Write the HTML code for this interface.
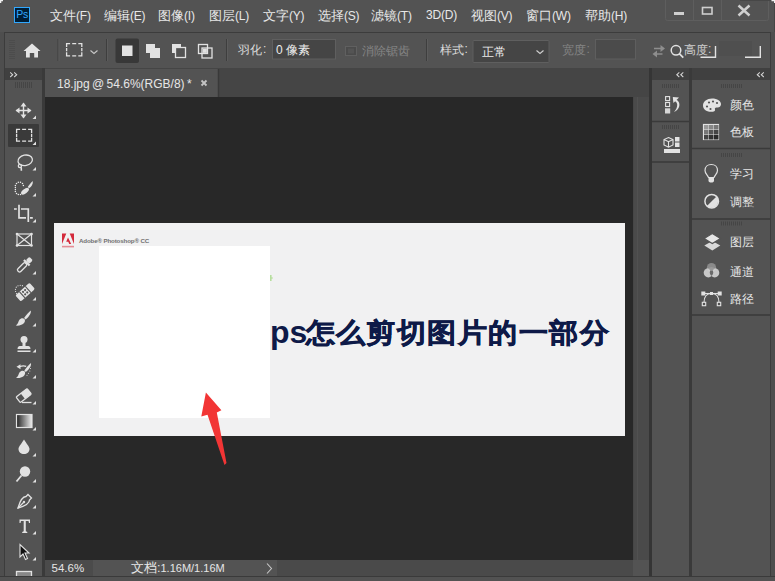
<!DOCTYPE html>
<html><head><meta charset="utf-8">
<style>
*{margin:0;padding:0;box-sizing:border-box}
html,body{width:775px;height:581px;overflow:hidden;background:#535353;font-family:"Liberation Sans",sans-serif;color:#e6e6e6}
.a{position:absolute}
.menu span{position:absolute;top:6.7px;font-size:13px;color:#e8e8e8;white-space:nowrap}
.menu i{font-style:normal;font-size:12px;letter-spacing:-0.2px}
</style></head><body>
<!-- frame -->
<div class="a" style="left:0;top:0;width:775px;height:581px;background:#535353"></div>
<!-- menu bar -->
<div class="a" style="left:14px;top:7px;width:16px;height:16px;background:#001e36;border:1.2px solid #31a8ff;color:#31a8ff;font-size:10.5px;line-height:13.5px;text-align:center;letter-spacing:-0.3px">Ps</div>
<div class="menu">
<span style="left:50px">文件<i>(F)</i></span>
<span style="left:104px">编辑<i>(E)</i></span>
<span style="left:158px">图像<i>(I)</i></span>
<span style="left:209px">图层<i>(L)</i></span>
<span style="left:263px">文字<i>(Y)</i></span>
<span style="left:318px">选择<i>(S)</i></span>
<span style="left:371px">滤镜<i>(T)</i></span>
<span style="left:426px"><i>3D(D)</i></span>
<span style="left:471px">视图<i>(V)</i></span>
<span style="left:526px">窗口<i>(W)</i></span>
<span style="left:585px">帮助<i>(H)</i></span>
</div>
<!-- options bar -->
<div class="a" style="left:0;top:32px;width:775px;height:549px;background:#4e4e4e"></div>
<div class="a" style="left:4px;top:32px;width:767px;height:37px;background:#535353;border:1px solid #3c3c3c"></div>
<!-- toolbar column -->
<div class="a" style="left:4px;top:68px;width:1px;height:513px;background:#3c3c3c"></div>
<div class="a" style="left:5px;top:69px;width:37px;height:507px;background:#535353"></div>
<div class="a" style="left:5px;top:68px;width:37px;height:12px;background:#404040"></div>
<div class="a" style="left:42px;top:68px;width:3px;height:513px;background:#3a3a3a"></div>
<!-- doc area -->
<div class="a" style="left:45px;top:68px;width:605px;height:29px;background:#454545"></div>
<div class="a" style="left:45px;top:69px;width:173px;height:28px;background:#535353"></div>
<div class="a" style="left:57px;top:77px;font-size:12px;word-spacing:-1px;color:#e6e6e6;white-space:nowrap">18.jpg @ 54.6%(RGB/8) *</div>
<svg class="a" style="left:0;top:60px" width="240" height="40" viewBox="0 60 240 40"><path d="M201.5 80.5 L206.5 85.5 M206.5 80.5 L201.5 85.5" stroke="#c4c4c4" stroke-width="1.8"/><path d="M218.5 69V97" stroke="#393939" stroke-width="1.5"/></svg>
<div class="a" style="left:45px;top:97px;width:588px;height:463px;background:#282828"></div>
<div class="a" style="left:633px;top:97px;width:16px;height:463px;background:#4a4a4a;border-left:1px solid #464646"></div>
<div class="a" style="left:637px;top:97px;width:1px;height:479px;background:#515151"></div>
<div class="a" style="left:45px;top:560px;width:604px;height:16px;background:#535353"></div>
<div class="a" style="left:45px;top:560px;width:48px;height:16px;background:#4b4b4b"></div>
<div class="a" style="left:277px;top:560px;width:356px;height:16px;background:#4a4a4a"></div>
<div class="a" style="left:51.5px;top:561.5px;font-size:11.5px;color:#e6e6e6">54.6%</div>
<div class="a" style="left:131px;top:560px;font-size:12.5px;color:#e6e6e6;white-space:nowrap">文档:<span style="font-size:11px;letter-spacing:0px">1.16M/1.16M</span></div>
<svg class="a" style="left:260px;top:560px" width="20" height="16" viewBox="260 560 20 16"><path d="M267 563.5 L271.5 568.5 L267 573.5" fill="none" stroke="#c8c8c8" stroke-width="1.1"/></svg>
<!-- image -->
<div class="a" style="left:54px;top:223px;width:571px;height:213px;background:#f1f1f2"></div>
<div class="a" style="left:99px;top:246px;width:171px;height:172px;background:#ffffff"></div>
<div class="a" style="left:270px;top:314px;font-size:32px;font-weight:bold;color:#0e1a48;white-space:nowrap">ps</div>
<div class="a" style="left:305.5px;top:314.5px;font-size:28.5px;letter-spacing:1.45px;font-weight:900;color:#0e1a48;-webkit-text-stroke:0.7px #0e1a48;white-space:nowrap;transform:scaleY(0.93);transform-origin:0 18px">怎么剪切图片的一部分</div>
<!-- dock -->
<div class="a" style="left:652px;top:69px;width:37px;height:507px;background:#535353"></div>
<div class="a" style="left:692px;top:69px;width:78px;height:507px;background:#535353"></div>
<div class="a" style="left:649px;top:68px;width:3px;height:513px;background:#353535"></div>
<div class="a" style="left:652px;top:68px;width:37px;height:12px;background:#404040"></div>
<div class="a" style="left:689px;top:68px;width:3px;height:513px;background:#3a3a3a"></div>
<div class="a" style="left:692px;top:68px;width:78px;height:12px;background:#404040"></div>
<div class="a" style="left:770px;top:32px;width:1px;height:549px;background:#3c3c3c"></div>
<svg class="a" style="left:0;top:0" width="775" height="581" viewBox="0 0 775 581">
<defs>
<linearGradient id="gr" x1="0" y1="0" x2="1" y2="0"><stop offset="0" stop-color="#222"/><stop offset="1" stop-color="#eee"/></linearGradient>
</defs>
<!-- selected marquee bg -->
<rect x="8" y="124" width="31" height="23" fill="#3a3a3a" rx="1"/>
<g fill="#e2e2e2" stroke="none">
<!-- tiny triangles -->
<path d="M36 115.5 L36 119 L32.5 119Z"/>
<path d="M36 141.5 L36 145 L32.5 145Z"/>
<path d="M36 167 L36 170.5 L32.5 170.5Z" />
<path d="M36 193 L36 196.5 L32.5 196.5Z"/>
<path d="M36 219 L36 222.5 L32.5 222.5Z"/>
<path d="M36 271 L36 274.5 L32.5 274.5Z"/>
<path d="M36 297 L36 300.5 L32.5 300.5Z"/>
<path d="M36 323 L36 326.5 L32.5 326.5Z"/>
<path d="M36 349 L36 352.5 L32.5 352.5Z"/>
<path d="M36 375 L36 378.5 L32.5 378.5Z"/>
<path d="M36 401 L36 404.5 L32.5 404.5Z"/>
<path d="M36 427 L36 430.5 L32.5 430.5Z"/>
<path d="M36 453 L36 456.5 L32.5 456.5Z"/>
<path d="M36 479 L36 482.5 L32.5 482.5Z"/>
<path d="M36 505 L36 508.5 L32.5 508.5Z"/>
<path d="M36 531 L36 534.5 L32.5 534.5Z"/>
<path d="M36 557 L36 560.5 L32.5 560.5Z"/>
</g>
<g stroke="#e2e2e2" fill="none" stroke-width="1.4">
<!-- move -->
<path d="M16.5 110.5H30.5M23.5 103.5V117.5"/>
</g>
<g fill="#e2e2e2">
<path d="M23.5 102.5 L26.5 106.5 L20.5 106.5Z M23.5 118.5 L26.5 114.5 L20.5 114.5Z M15.5 110.5 L19.5 107.5 L19.5 113.5Z M31.5 110.5 L27.5 107.5 L27.5 113.5Z"/>
</g>
<!-- marquee -->
<path d="M16.6 132.9 V129.4 H20.1 M28.1 129.4 H31.6 V132.9 M31.6 137.7 V141.2 H28.1 M20.1 141.2 H16.6 V137.7 M22.1 129.4 H26.1 M22.1 141.2 H26.1 M16.6 133.7 V136.9 M31.6 133.7 V136.9" fill="none" stroke="#e2e2e2" stroke-width="1.3"/>
<!-- lasso -->
<g stroke="#e2e2e2" fill="none" stroke-width="1.3">
<ellipse cx="25.2" cy="160.3" rx="7.3" ry="5.2" transform="rotate(-12 25.2 160.3)"/>
<circle cx="19.9" cy="165.9" r="1.6"/>
<path d="M21.2 167.2 L21.4 170.8" stroke-width="1.6"/>
</g>
<!-- quick selection -->
<g fill="#ececec"><circle cx="18.3" cy="182.3" r="0.75"/><circle cx="20.5" cy="182.3" r="0.75"/><circle cx="22.5" cy="183.4" r="0.75"/><circle cx="23.4" cy="185.4" r="0.75"/><circle cx="16.5" cy="183.4" r="0.75"/><circle cx="15.4" cy="185.4" r="0.75"/><circle cx="15.4" cy="187.4" r="0.75"/><circle cx="15.4" cy="189.4" r="0.75"/><circle cx="15.4" cy="191.4" r="0.75"/><circle cx="16.5" cy="193.5" r="0.75"/><circle cx="18.3" cy="194.6" r="0.75"/><circle cx="20.5" cy="194.6" r="0.75"/></g>
<path d="M32.8 181 C33.2 184 31.5 186.8 29 188.3 L27.8 187 C29.3 184.8 31 182.6 32.8 181Z" fill="#e2e2e2"/>
<ellipse cx="25" cy="191.2" rx="4.6" ry="2.3" transform="rotate(-38 25 191.2)" fill="#e2e2e2"/>
<!-- crop -->
<g stroke="#e2e2e2" fill="none" stroke-width="1.7">
<path d="M19 204.8 V217.8 H26"/>
<path d="M21 209 H28.3 V222"/>
<path d="M14 209 H16.8 M30 217.8 H32.8"/>
</g>
<!-- frame -->
<g stroke="#e2e2e2" fill="none" stroke-width="1.2">
<rect x="17" y="234" width="14.5" height="11.5"/>
<path d="M17 234 L31.5 245.5 M31.5 234 L17 245.5"/>
</g>
<g fill="#e2e2e2"><circle cx="17" cy="234" r="1.3"/><circle cx="31.5" cy="234" r="1.3"/><circle cx="17" cy="245.5" r="1.3"/><circle cx="31.5" cy="245.5" r="1.3"/></g>
<!-- eyedropper -->
<g transform="rotate(45 24 265.5)">
<rect x="21.5" y="255.5" width="5" height="5" rx="1.5" fill="#e2e2e2"/>
<rect x="20" y="260.5" width="8" height="2.2" fill="#e2e2e2"/>
<rect x="22" y="262.7" width="4" height="11" rx="1.6" fill="none" stroke="#e2e2e2" stroke-width="1.3"/>
</g>
<!-- healing -->
<g transform="rotate(-42 25 292)">
<rect x="15.5" y="288" width="19" height="8.4" rx="1.5" fill="#e2e2e2"/>
<path d="M21 288V296.4M29 288V296.4" stroke="#535353" stroke-width="1.1"/>
<g fill="#535353"><circle cx="23.6" cy="290.6" r="1.05"/><circle cx="26.4" cy="290.6" r="1.05"/><circle cx="23.6" cy="293.8" r="1.05"/><circle cx="26.4" cy="293.8" r="1.05"/></g>
</g>
<g fill="#e6e6e6"><circle cx="15.6" cy="291.5" r="0.6"/><circle cx="15.5" cy="289.3" r="0.6"/><circle cx="16.3" cy="287.2" r="0.6"/><circle cx="18" cy="285.8" r="0.6"/><circle cx="20.2" cy="285.3" r="0.6"/><circle cx="22.4" cy="285.7" r="0.6"/><circle cx="16.5" cy="293.5" r="0.6"/></g>
<!-- brush -->
<path d="M30.8 310.6 C31.4 313.5 28.8 317 25.6 319.6 L24.1 318.1 C26.3 315 28.6 312.2 30.8 310.6Z" fill="#e2e2e2"/>
<path d="M24.6 319.2 C23.2 317.6 20.6 318.2 19.4 319.8 C18.2 321.4 18.6 323.6 15.8 325.6 C19.5 325.9 22.8 324.8 24.2 322.8 C25 321.6 25.2 320.2 24.6 319.2Z" fill="#e2e2e2"/>
<!-- stamp -->
<g fill="#e2e2e2">
<circle cx="24" cy="339.5" r="3.5"/>
<rect x="22.5" y="342" width="3" height="4"/>
<path d="M17.5 349 C17.5 346.5 19 346 21 346 H27 C29 346 30.5 346.5 30.5 349Z"/>
<rect x="17.5" y="350.5" width="13" height="1.5"/>
</g>
<!-- history brush -->
<path d="M31 363 C31.6 365.9 29 369.4 25.8 372 L24.3 370.5 C26.5 367.4 28.8 364.6 31 363Z" fill="#e2e2e2"/>
<path d="M24.8 371.6 C23.4 370 20.8 370.6 19.6 372.2 C18.4 373.8 18.8 376 16 378 C19.7 378.3 23 377.2 24.4 375.2 C25.2 374 25.4 372.6 24.8 371.6Z" fill="#e2e2e2"/>
<path d="M16.5 366.8 L20.5 364.3 L20.5 369.3Z" fill="#e2e2e2"/>
<path d="M19.5 366.8 C22 365.6 24.5 365.6 26.2 366.4" stroke="#e2e2e2" stroke-width="1.2" fill="none"/>
<g fill="#d8d8d8"><circle cx="30.5" cy="368.5" r="0.55"/><circle cx="29.8" cy="371" r="0.55"/><circle cx="28.5" cy="373.3" r="0.55"/><circle cx="27" cy="375.2" r="0.55"/></g>
<!-- eraser -->
<g transform="rotate(-38 24 396)">
<rect x="17" y="392" width="14" height="7" rx="1" fill="none" stroke="#e2e2e2" stroke-width="1.3"/>
<rect x="23" y="392" width="8" height="7" fill="#e2e2e2"/>
</g>
<path d="M22 402.5 H31.5" stroke="#e2e2e2" stroke-width="1.3"/>
<!-- gradient -->
<rect x="16.5" y="414.5" width="15.5" height="13" fill="url(#gr)" stroke="#e2e2e2" stroke-width="1.2"/>
<!-- blur drop -->
<path d="M24 439.5 C22 443 18.5 446.5 18.5 449 C18.5 452 21 454 24 454 C27 454 29.5 452 29.5 449 C29.5 446.5 26 443 24 439.5Z" fill="#e2e2e2"/>
<!-- dodge -->
<circle cx="25" cy="471.5" r="5.2" fill="#e2e2e2"/>
<path d="M21.5 475.5 L16.5 481.5" stroke="#e2e2e2" stroke-width="1.8"/>
<!-- pen -->
<g stroke="#e2e2e2" fill="none" stroke-width="1.3">
<path d="M28 494.5 L31.5 498 L29.5 500 C29.5 503.5 25 506 18 508 C20 501 22.5 496.5 26 496.5Z"/>
<path d="M18 508 L23.5 502.5"/>
</g>
<circle cx="24" cy="502" r="1.2" fill="#e2e2e2"/>
<!-- type -->
<g fill="#e2e2e2">
<path d="M19.5 519.5 H30 V523 H29 L28.5 521 H25.8 V531.3 L27.3 532 V533 H22.2 V532 L23.7 531.3 V521 H21 L20.5 523 H19.5Z"/>
</g>
<!-- path select -->
<path d="M20 544.5 V557 L23 554 L25.5 559.5 L27.5 558.5 L25 553 L29 553Z" fill="#111" stroke="#e2e2e2" stroke-width="1.1"/>
<!-- rect -->
<rect x="16.5" y="571.5" width="15" height="8" fill="#888" stroke="#e2e2e2" stroke-width="1.3"/>
</svg>

<div class="a" style="left:0;top:576px;width:775px;height:5px;background:#525252;border-top:1.5px solid #3a3a3a"></div>
<svg class="a" style="left:0;top:0" width="775" height="70" viewBox="0 0 775 70">
<!-- gripper -->
<g stroke="#4a4a4a" stroke-width="0.8"><path d="M9 40.5H15M9 42.5H15M9 44.5H15M9 46.5H15M9 48.5H15M9 50.5H15M9 52.5H15M9 54.5H15M9 56.5H15M9 58.5H15"/></g>
<!-- home -->
<path d="M32 43.5 L40.5 51 H38 V57.5 H34.2 V53 H29.8 V57.5 H26 V51 H23.5Z" fill="#e4e4e4"/>
<!-- separators -->
<g stroke="#3e3e3e" stroke-width="1"><path d="M58 39V61M106.5 39V61M226.5 39V61M426.5 39V61"/></g>
<g stroke="#5c5c5c" stroke-width="1"><path d="M59 39V61M107.5 39V61M227.5 39V61M427.5 39V61"/></g>
<!-- marquee -->
<path d="M66.6 47.1 V43.6 H70.1 M78.3 43.6 H81.8 V47.1 M81.8 52.3 V55.8 H78.3 M70.1 55.8 H66.6 V52.3 M72.2 43.6 H76.2 M72.2 55.8 H76.2 M66.6 48.1 V51.3 M81.8 48.1 V51.3" fill="none" stroke="#e2e2e2" stroke-width="1.3"/>
<path d="M90.5 50.5 L94 53.5 L97.5 50.5" fill="none" stroke="#c8c8c8" stroke-width="1.1"/>
<!-- selection mode buttons -->
<rect x="115.5" y="38.5" width="23.5" height="24.5" rx="2" fill="#383838"/>
<rect x="122" y="45.5" width="10.5" height="10.5" fill="#e2e2e2"/>
<g fill="#e2e2e2">
<rect x="146" y="44" width="9" height="9"/>
<rect x="150" y="48" width="10" height="10"/>
</g>
<g>
<rect x="172" y="44" width="9" height="9" fill="#e2e2e2"/>
<rect x="175.5" y="47.5" width="10" height="10" fill="#535353" stroke="#e2e2e2" stroke-width="1.3"/>
</g>
<g fill="none" stroke="#e2e2e2" stroke-width="1.3">
<rect x="198.5" y="44.5" width="9" height="9"/>
<rect x="202" y="48" width="10" height="10"/>
</g>
<rect x="202.7" y="48.7" width="4.2" height="4.2" fill="#e2e2e2"/>
<!-- inputs -->
<rect x="272.5" y="39.5" width="63" height="19.5" fill="#454545" stroke="#5f5f5f" stroke-width="1"/>
<rect x="345.5" y="46.5" width="11" height="9" fill="#4b4b4b" stroke="#606060" stroke-width="1"/><rect x="348" y="48.5" width="6" height="5" fill="#545454"/>
<rect x="473" y="40.5" width="76" height="22" rx="1" fill="#454545" stroke="#5f5f5f" stroke-width="1"/>
<path d="M536.5 50.5 L540 53.5 L543.5 50.5" fill="none" stroke="#d0d0d0" stroke-width="1.1"/>
<rect x="595.5" y="39.5" width="40" height="19.5" fill="#4b4b4b" stroke="#5e5e5e" stroke-width="1"/>
<!-- swap -->
<g fill="none" stroke="#8e8e8e" stroke-width="1.5"><path d="M654 48.5H662.5M654 54H662.5"/></g>
<g fill="#8e8e8e"><path d="M665 48.5 L660.5 45 V52Z M652.5 54 L657 50.5 V57.5Z"/></g>
<!-- search -->
<circle cx="676" cy="50.3" r="4.8" fill="none" stroke="#e2e2e2" stroke-width="1.5"/>
<path d="M679.3 53.6 L683.3 57.6" stroke="#e2e2e2" stroke-width="1.7"/>
<!-- screen bracket icon -->
<rect x="719" y="41" width="33" height="15" fill="#4f4f4f"/>
<g fill="none" stroke="#e2e2e2" stroke-width="1.4"><path d="M700.5 57.3H715.5V46M745 57.3H760.3V46"/></g>
</svg>
<div class="a" style="left:238px;top:42px;font-size:12px;color:#dcdcdc;white-space:nowrap">羽化</div>
<div class="a" style="left:263px;top:42px;font-size:12px;color:#dcdcdc">:</div>
<div class="a" style="left:276px;top:42px;font-size:12px;color:#ececec;white-space:nowrap">0 像素</div>
<div class="a" style="left:362px;top:42.5px;font-size:12px;color:#858585;white-space:nowrap">消除锯齿</div>
<div class="a" style="left:440px;top:42px;font-size:12px;color:#dcdcdc;white-space:nowrap">样式</div>
<div class="a" style="left:464.5px;top:42px;font-size:12px;color:#dcdcdc">:</div>
<div class="a" style="left:482px;top:44px;font-size:12px;color:#ececec;white-space:nowrap">正常</div>
<div class="a" style="left:562px;top:42px;font-size:12px;color:#858585;white-space:nowrap">宽度</div>
<div class="a" style="left:586.5px;top:42px;font-size:12px;color:#858585">:</div>
<div class="a" style="left:684px;top:42px;font-size:12px;color:#cfcfcf;white-space:nowrap">高度</div>
<div class="a" style="left:708px;top:42px;font-size:12px;color:#cfcfcf">:</div>
<svg class="a" style="left:0;top:0" width="775" height="35" viewBox="0 0 775 35">
<!-- window buttons -->
<g fill="none" stroke="#5e5e5e" stroke-width="1"><path d="M665.5 0V18.5Q665.5 20.5 667.5 20.5H766.5Q768.5 20.5 768.5 18.5V0M693.5 0V20M721.5 0V20"/></g>
<rect x="674" y="12" width="10" height="3" fill="#cfcfcf"/>
<rect x="702.5" y="7.5" width="9.5" height="6.5" fill="none" stroke="#cfcfcf" stroke-width="1.6"/>
<path d="M738.5 5.5 L749.5 15.5 M749.5 5.5 L738.5 15.5" stroke="#cfcfcf" stroke-width="2.5"/>
</svg>

<svg class="a" style="left:0;top:0" width="6" height="6" viewBox="0 0 6 6"><path d="M0 0 H3 V1.3 H1.3 V3 H0Z" fill="#f0f0f0"/></svg>
<svg class="a" style="left:740px;top:0" width="35" height="35" viewBox="740 0 35 35"><path d="M740 0.5H771" stroke="#474747" stroke-width="1"/><path d="M771.5 0 H775 V3.5 H774 V1.2 H771.5Z" fill="#f0f0f0"/><path d="M774.5 3V32" stroke="#454545" stroke-width="1"/></svg>
<!-- toolbar header icon -->
<svg class="a" style="left:0;top:60px" width="775" height="270" viewBox="0 60 775 270">
<g fill="#d8d8d8">
<path d="M10.5 72 L13.5 74.7 L10.5 77.4 L9.9 76.6 L11.9 74.7 L9.9 72.8Z M14.5 72 L17.5 74.7 L14.5 77.4 L13.9 76.6 L15.9 74.7 L13.9 72.8Z"/>
<path d="M679.0 72 L676.0 74.7 L679.0 77.4 L679.6 76.6 L677.6 74.7 L679.6 72.8Z M683.0 72 L680.0 74.7 L683.0 77.4 L683.6 76.6 L681.6 74.7 L683.6 72.8Z"/>
<path d="M759.5 72 L756.5 74.7 L759.5 77.4 L760.1 76.6 L758.1 74.7 L760.1 72.8Z M763.5 72 L760.5 74.7 L763.5 77.4 L764.1 76.6 L762.1 74.7 L764.1 72.8Z"/>
</g>
<!-- grippers -->
<g stroke="#444" stroke-width="0.9">
<path d="M15.5 82V88M17.5 82V88M19.5 82V88M21.5 82V88M23.5 82V88M25.5 82V88M27.5 82V88M29.5 82V88M31.5 82V88"/>
<path d="M662.5 84V88M664.5 84V88M666.5 84V88M668.5 84V88M670.5 84V88M672.5 84V88M674.5 84V88M676.5 84V88M678.5 84V88"/>
<path d="M662.5 125V129M664.5 125V129M666.5 125V129M668.5 125V129M670.5 125V129M672.5 125V129M674.5 125V129M676.5 125V129M678.5 125V129"/>
<path d="M721.5 84V88M723.5 84V88M725.5 84V88M727.5 84V88M729.5 84V88M731.5 84V88M733.5 84V88M735.5 84V88M737.5 84V88M739.5 84V88M741.5 84V88"/>
<path d="M721.5 153V157M723.5 153V157M725.5 153V157M727.5 153V157M729.5 153V157M731.5 153V157M733.5 153V157M735.5 153V157M737.5 153V157M739.5 153V157M741.5 153V157"/>
<path d="M721.5 221.5V225.5M723.5 221.5V225.5M725.5 221.5V225.5M727.5 221.5V225.5M729.5 221.5V225.5M731.5 221.5V225.5M733.5 221.5V225.5M735.5 221.5V225.5M737.5 221.5V225.5M739.5 221.5V225.5M741.5 221.5V225.5"/>
</g>
<!-- panel group borders -->
<g stroke="#3a3a3a" stroke-width="1.5">
<path d="M652 121.5H689M652 162H689M692 148.5H770M692 219H770M692 315H770"/>
</g>
<!-- history icon -->
<g fill="none" stroke="#e2e2e2" stroke-width="1.1">
<rect x="665.6" y="96.6" width="4" height="4"/>
<rect x="665.6" y="102.5" width="4" height="4"/>
</g>
<rect x="665" y="108.3" width="5.2" height="5.2" fill="#d6d6d6"/>
<path d="M675.5 99.2 C679.3 100.6 680.2 104.5 678.8 107.6 C677.9 109.6 676 111.2 674 112 C676 110 677.4 107.4 677.2 104.6 C677 102.6 676 101.6 674.4 101Z" fill="#e2e2e2"/>
<path d="M672.8 97 L679 97.4 L673.4 103Z" fill="#e2e2e2"/>
<!-- properties icon -->
<g fill="none" stroke="#e2e2e2" stroke-width="1.1">
<path d="M668.5 137.5 L673 139.5 V145 L668.5 147.2 L664 145 V139.5Z M664 139.5 L668.5 141.7 L673 139.5 M668.5 141.7V147.2"/>
</g>
<rect x="675" y="137" width="4.5" height="4.5" fill="#e2e2e2"/>
<rect x="675" y="142.5" width="4.5" height="4.5" fill="#e2e2e2"/>
<rect x="664" y="149" width="16" height="4" fill="#e2e2e2"/>
<!-- palette -->
<path d="M712 98.5 C717.5 98.5 721 101 721 104 C721 107 718.5 107.5 716.5 107.5 C715 107.5 714.5 108.5 715 109.5 C715.5 111 714 111.8 711 111.8 C706 111.8 703 109 703 105.5 C703 101.5 707 98.5 712 98.5Z" fill="#e2e2e2"/>
<g fill="#535353"><circle cx="707" cy="106.5" r="1.1"/><circle cx="709" cy="102.5" r="1.1"/><circle cx="713" cy="101.5" r="1.1"/><circle cx="717" cy="103" r="1.1"/><circle cx="710.5" cy="109" r="1.1"/></g>
<!-- swatches -->
<rect x="703.5" y="124.5" width="15" height="15" fill="none" stroke="#e2e2e2" stroke-width="1.2"/>
<g stroke="#e2e2e2" stroke-width="1"><path d="M708.5 124.5V139.5M713.5 124.5V139.5M703.5 129.5H718.5M703.5 134.5H718.5"/></g>
<rect x="704" y="125" width="4.5" height="4.5" fill="#999"/>
<rect x="709" y="125" width="4.5" height="4.5" fill="#888"/>
<rect x="714" y="125" width="4.5" height="4.5" fill="#777"/>
<rect x="704" y="130" width="4.5" height="4.5" fill="#777"/>
<rect x="709" y="130" width="4.5" height="4.5" fill="#555"/>
<rect x="714" y="130" width="4.5" height="4.5" fill="#444"/>
<rect x="704" y="135" width="4.5" height="4.5" fill="#444"/>
<rect x="709" y="135" width="4.5" height="4.5" fill="#333"/>
<rect x="714" y="135" width="4.5" height="4.5" fill="#2a2a2a"/>
<!-- bulb -->
<path d="M711.3 164.5 C715 164.5 717.5 167 717.5 170.5 C717.5 173.5 715 175 714 177.5 H708.5 C707.5 175 705 173.5 705 170.5 C705 167 707.5 164.5 711.3 164.5Z" fill="none" stroke="#e2e2e2" stroke-width="1.2"/>
<path d="M708.5 177.5 H714 V180.5 C714 182 713 182.5 711.3 182.5 C709.5 182.5 708.5 182 708.5 180.5Z" fill="#e2e2e2"/>
<!-- adjustments -->
<circle cx="711.7" cy="201.2" r="6.8" fill="none" stroke="#e2e2e2" stroke-width="1.5"/>
<path d="M716.5 196.4 A6.8 6.8 0 0 1 706.9 206 Z" fill="#e2e2e2"/>
<!-- layers -->
<path d="M712.3 241 L720.3 245.5 L712.3 250.5 L704.3 245.5Z" fill="#d8d8d8"/>
<path d="M712.3 233.6 L720.5 238.5 L712.3 243.6 L704.1 238.5Z" fill="#e6e6e6" stroke="#535353" stroke-width="1.2"/>
<!-- channels -->
<circle cx="711.5" cy="267.5" r="4.6" fill="#8a8a8a"/>
<circle cx="708.3" cy="272.8" r="4.6" fill="#d4d4d4" fill-opacity="0.9"/>
<circle cx="714.7" cy="272.8" r="4.6" fill="#d4d4d4" fill-opacity="0.9"/>
<path d="M711.5 269.5 C713.6 271 714 273.5 711.5 276 C709 273.5 709.4 271 711.5 269.5Z" fill="#6a6a6a"/>
<path d="M708 268.5 A4.6 4.6 0 0 1 715 268.5 L711.5 271Z" fill="#9a9a9a"/>
<!-- paths -->
<g fill="none" stroke="#e2e2e2" stroke-width="1.1">
<path d="M704 302.5 C704 296.5 707 293.5 711.5 293.5 C716 293.5 719 296.5 719 302.5"/>
<path d="M702 293.5H721"/>
<rect x="702.3" y="302.3" width="3.4" height="3.4" fill="#535353"/>
<rect x="717.3" y="302.3" width="3.4" height="3.4" fill="#535353"/>
</g>
<rect x="701.3" y="291.5" width="4" height="4" fill="#e2e2e2"/>
<rect x="717.7" y="291.5" width="4" height="4" fill="#e2e2e2"/>
<rect x="710" y="292" width="3" height="3" fill="#e2e2e2"/>
</svg>
<div class="a" style="left:729.5px;top:97px;font-size:12px;color:#e6e6e6;white-space:nowrap">颜色</div>
<div class="a" style="left:729.5px;top:123.5px;font-size:12px;color:#e6e6e6;white-space:nowrap">色板</div>
<div class="a" style="left:729.5px;top:166px;font-size:12px;color:#e6e6e6;white-space:nowrap">学习</div>
<div class="a" style="left:729.5px;top:193.5px;font-size:12px;color:#e6e6e6;white-space:nowrap">调整</div>
<div class="a" style="left:729.5px;top:234px;font-size:12px;color:#e6e6e6;white-space:nowrap">图层</div>
<div class="a" style="left:729.5px;top:264px;font-size:12px;color:#e6e6e6;white-space:nowrap">通道</div>
<div class="a" style="left:729.5px;top:291px;font-size:12px;color:#e6e6e6;white-space:nowrap">路径</div>

<svg class="a" style="left:0;top:0" width="775" height="581" viewBox="0 0 775 581">
<!-- adobe logo -->
<g fill="#d42a3c">
<path d="M62 233.5 H66.3 L62 244Z"/>
<path d="M69.7 233.5 H74 V244Z"/>
<path d="M68 237.5 L71.2 244 H69.2 L68.3 241.8 H66.2Z"/>
</g>
<rect x="62" y="245.8" width="12" height="1.6" fill="#e58c95"/>
<!-- arrow -->
<path d="M205.9 392.4 L221.4 410.2 L216.8 412.6 L226.5 463 L224.5 465 L207.5 414.8 L201.3 416.4Z" fill="#f23535"/>
<!-- specks -->
<g fill="#a8d98a">
<rect x="270" y="275" width="1.6" height="6" fill-opacity="0.8"/>
<circle cx="272" cy="278" r="1" fill-opacity="0.5"/>
</g>
</svg>
<div class="a" style="left:79px;top:236.5px;font-size:6.2px;font-weight:bold;color:#707070;white-space:nowrap;letter-spacing:-0.15px">Adobe® Photoshop® CC</div>

</body></html>
